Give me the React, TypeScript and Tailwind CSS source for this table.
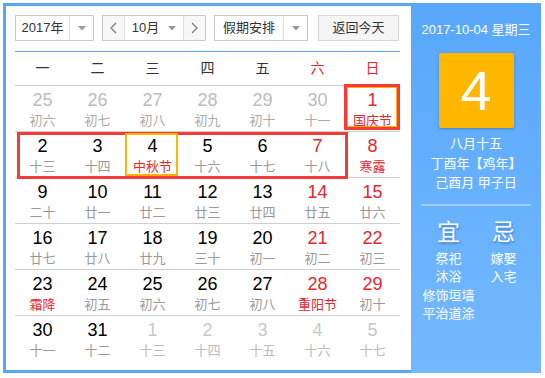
import React from "react";

type Cell = { n: number; l: string; other?: boolean; red?: boolean; lred?: boolean };

const rows: Cell[][] = [
  [
    { n: 25, l: "初六", other: true },
    { n: 26, l: "初七", other: true },
    { n: 27, l: "初八", other: true },
    { n: 28, l: "初九", other: true },
    { n: 29, l: "初十", other: true },
    { n: 30, l: "十一", other: true },
    { n: 1, l: "国庆节", red: true, lred: true },
  ],
  [
    { n: 2, l: "十三" },
    { n: 3, l: "十四" },
    { n: 4, l: "中秋节", lred: true },
    { n: 5, l: "十六" },
    { n: 6, l: "十七" },
    { n: 7, l: "十八", red: true },
    { n: 8, l: "寒露", red: true, lred: true },
  ],
  [
    { n: 9, l: "二十" },
    { n: 10, l: "廿一" },
    { n: 11, l: "廿二" },
    { n: 12, l: "廿三" },
    { n: 13, l: "廿四" },
    { n: 14, l: "廿五", red: true },
    { n: 15, l: "廿六", red: true },
  ],
  [
    { n: 16, l: "廿七" },
    { n: 17, l: "廿八" },
    { n: 18, l: "廿九" },
    { n: 19, l: "三十" },
    { n: 20, l: "初一" },
    { n: 21, l: "初二", red: true },
    { n: 22, l: "初三", red: true },
  ],
  [
    { n: 23, l: "霜降", lred: true },
    { n: 24, l: "初五" },
    { n: 25, l: "初六" },
    { n: 26, l: "初七" },
    { n: 27, l: "初八" },
    { n: 28, l: "重阳节", red: true, lred: true },
    { n: 29, l: "初十", red: true },
  ],
  [
    { n: 30, l: "十一" },
    { n: 31, l: "十二" },
    { n: 1, l: "十三", other: true },
    { n: 2, l: "十四", other: true },
    { n: 3, l: "十五", other: true },
    { n: 4, l: "十六", other: true },
    { n: 5, l: "十七", other: true },
  ],
];

const Arrow = () => (
  <svg width="8" height="5" viewBox="0 0 8 5">
    <path d="M0 0 L8 0 L4 4.5 Z" fill="#999" />
  </svg>
);

const Chevron = ({ dir }: { dir: "l" | "r" }) => (
  <svg width="7" height="12" viewBox="0 0 7 12">
    <path
      d={dir === "l" ? "M6 1 L1 6 L6 11" : "M1 1 L6 6 L1 11"}
      stroke="#777"
      strokeWidth="1.2"
      fill="none"
    />
  </svg>
);

export default function App() {
  return (
    <div
      className="pt-[3px] pl-[3px]"
      style={{ fontFamily: '"Liberation Sans", "Noto Sans CJK SC", sans-serif' }}
    >
      <div className="flex w-[538px] h-[370px]">
        {/* Left */}
        <div className="w-[408px] h-[370px] border-l-[3px] border-t-[3px] border-b-[3px] border-[#5aa6f6] bg-white pl-[9px] pr-[8px] pt-[9px]">
          {/* toolbar */}
          <div className="flex h-[26px] text-[13px] text-[#333]">
            <div className="flex w-[79px] h-[26px] border border-[#c8c8c8] bg-white">
              <div className="w-[54px] flex items-center justify-center border-r border-[#dcdcdc]">2017年</div>
              <div className="flex-1 flex items-center justify-center">
                <Arrow />
              </div>
            </div>
            <div className="ml-[8px] flex w-[104px] h-[26px] border border-[#c8c8c8] bg-white">
              <div className="w-[22px] flex items-center justify-center border-r border-[#dcdcdc] bg-[#f7f7f7]">
                <Chevron dir="l" />
              </div>
              <div className="w-[59px] flex items-center justify-center gap-[9px] border-r border-[#dcdcdc]">
                <span>10月</span>
                <Arrow />
              </div>
              <div className="flex-1 flex items-center justify-center bg-[#f7f7f7]">
                <Chevron dir="r" />
              </div>
            </div>
            <div className="ml-[8px] flex w-[94px] h-[26px] border border-[#c8c8c8] bg-white">
              <div className="w-[69px] flex items-center justify-center border-r border-[#dcdcdc]">假期安排</div>
              <div className="flex-1 flex items-center justify-center">
                <Arrow />
              </div>
            </div>
            <div className="ml-[10px] w-[81px] h-[26px] flex items-center justify-center border border-[#d6d6d6] bg-[#f5f5f5]">
              返回今天
            </div>
          </div>
          {/* blue line */}
          <div className="mt-[10px] w-[385px] h-px bg-[#5aa6f6]" />
          {/* weekday header */}
          <div className="grid grid-cols-7 w-[385px] h-[34px] border-b border-[#cfcfcf] text-[14px] text-[#333]">
            {["一", "二", "三", "四", "五", "六", "日"].map((d, i) => (
              <div key={d} className={`flex items-center justify-center ${i >= 5 ? "text-[#e8262b]" : ""}`}>
                {d}
              </div>
            ))}
          </div>
          {/* rows */}
          <div className="w-[385px]">
            {rows.map((row, ri) => (
              <div
                key={ri}
                className={`relative grid grid-cols-7 h-[46px] ${ri < 5 ? "border-b border-[#cfcfcf]" : ""}`}
              >
                {row.map((c, ci) => {
                  const numColor = c.other
                    ? ri === 0
                      ? "text-[#bcbcbc]"
                      : "text-[#c8c8c8]"
                    : c.red
                    ? "text-[#e8262b]"
                    : "text-black";
                  const lColor = c.lred
                    ? "text-[#e8262b]"
                    : c.other
                    ? ri === 0
                      ? "text-[#aaaaaa]"
                      : "text-[#bbbbbb]"
                    : "text-[#999]";
                  return (
                    <div key={ci} className="flex flex-col items-center pt-[4px]">
                      <div className={`text-[18px] leading-[20px] ${numColor}`}>{c.n}</div>
                      <div className={`mt-[2px] text-[13px] leading-[17px] ${lColor}`}>{c.l}</div>
                    </div>
                  );
                })}
                {ri === 0 && (
                  <div className="absolute left-[329px] top-[-2px] w-[56px] h-[46px] border-[3px] border-[#f53a3a]">
                    <div className="w-full h-full border border-[#ffb400]" />
                  </div>
                )}
                {ri === 1 && (
                  <>
                    <div className="absolute left-[2px] top-0 w-[331px] h-[47px] border-[3px] border-[#f53a3a]" />
                    <div className="absolute left-[110px] top-[1px] w-[53px] h-[43px] border-2 border-[#ffb400]" />
                  </>
                )}
              </div>
            ))}
          </div>
        </div>
        {/* Right panel */}
        <div className="w-[130px] h-[370px] bg-gradient-to-b from-[#58a7fb] to-[#74b9ff] text-white flex flex-col items-center">
          <div className="mt-[19px] text-[13px] leading-[16px]">2017-10-04 星期三</div>
          <div className="mt-[15px] w-[75px] h-[75px] rounded-[2px] bg-[#ffb700] shadow-[0_1px_3px_rgba(0,0,0,0.25)] flex items-center justify-center text-[56px] leading-none">
            4
          </div>
          <div className="mt-[6px] text-[13px] leading-[19.5px] text-center">
            <div>八月十五</div>
            <div>丁酉年【鸡年】</div>
            <div>己酉月 甲子日</div>
          </div>
          <div className="mt-[11px] w-[110px] h-[2px] bg-[#9ccbff]" />
          <div className="w-[110px] grid grid-cols-2 mt-[12px]">
            <div className="flex flex-col items-center">
              <div className="text-[23px] leading-[28px] [text-shadow:1px_2px_2px_rgba(0,60,140,0.35)]">宜</div>
              <div className="mt-[4px] text-[13px] leading-[18.5px] text-center">
                <div>祭祀</div>
                <div>沐浴</div>
                <div>修饰垣墙</div>
                <div>平治道涂</div>
              </div>
            </div>
            <div className="flex flex-col items-center">
              <div className="text-[23px] leading-[28px] [text-shadow:1px_2px_2px_rgba(0,60,140,0.35)]">忌</div>
              <div className="mt-[4px] text-[13px] leading-[18.5px] text-center">
                <div>嫁娶</div>
                <div>入宅</div>
              </div>
            </div>
          </div>
        </div>
      </div>
    </div>
  );
}
